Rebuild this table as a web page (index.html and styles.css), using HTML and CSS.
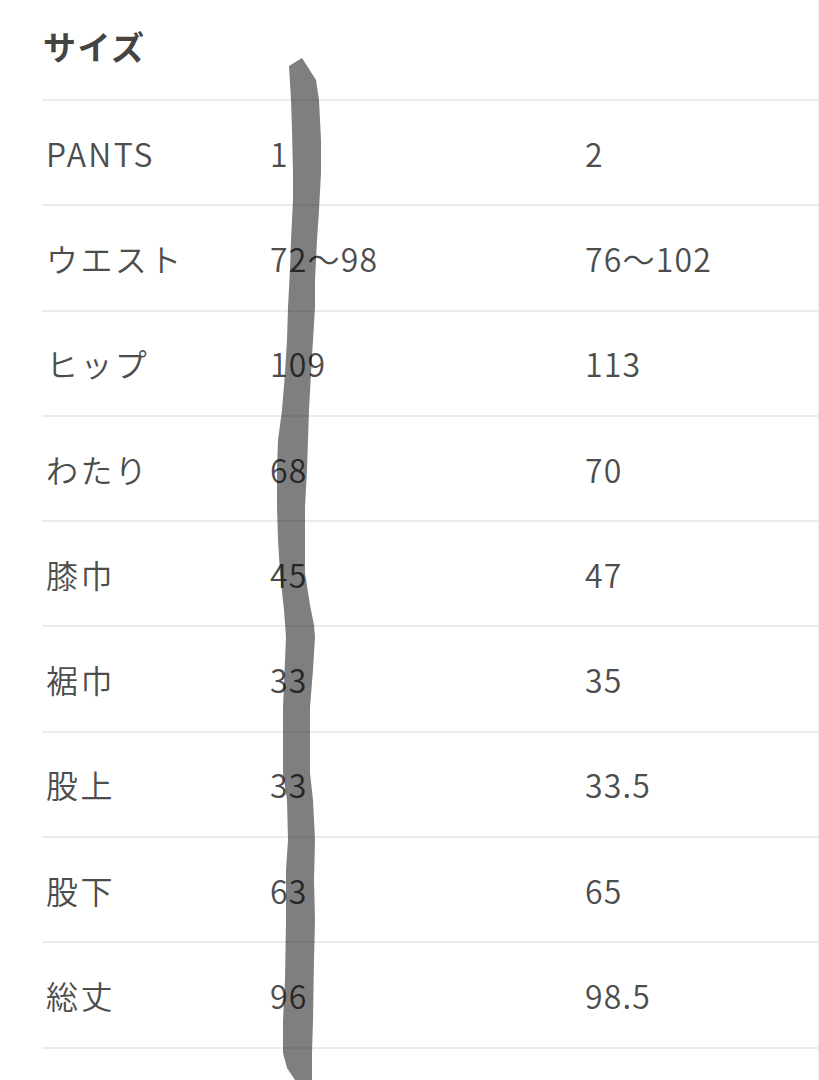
FILE: index.html
```html
<!DOCTYPE html>
<html lang="ja">
<head>
<meta charset="utf-8">
<title>サイズ</title>
<link rel="stylesheet" href="styles.css">
</head>
<body>
<div class="page">
  <section class="size-table">
    <h2 class="title">サイズ</h2>
    <div class="rows">
      <div class="row"><span class="label">PANTS</span><span class="cell">1</span><span class="cell">2</span></div>
      <div class="row"><span class="label">ウエスト</span><span class="cell">72〜98</span><span class="cell">76〜102</span></div>
      <div class="row"><span class="label">ヒップ</span><span class="cell">109</span><span class="cell">113</span></div>
      <div class="row"><span class="label">わたり</span><span class="cell">68</span><span class="cell">70</span></div>
      <div class="row"><span class="label">膝巾</span><span class="cell">45</span><span class="cell">47</span></div>
      <div class="row"><span class="label">裾巾</span><span class="cell">33</span><span class="cell">35</span></div>
      <div class="row"><span class="label">股上</span><span class="cell">33</span><span class="cell">33.5</span></div>
      <div class="row"><span class="label">股下</span><span class="cell">63</span><span class="cell">65</span></div>
      <div class="row"><span class="label">総丈</span><span class="cell">96</span><span class="cell">98.5</span></div>
      <div class="row end"></div>
    </div>
  </section>
  <svg class="scribble" width="819" height="1080" viewBox="0 0 819 1080" aria-hidden="true">
    <path d="M289 66 L302 58 L316 80 L319 100 L321 140 L321 173 L319 210 L317 240 L315 280 L315 307 L313 340 L311 373 L309 410 L308 440 L307 470 L305 507 L305 540 L305 573 L310 605 L314 625 L315 637 L313 670 L310 707 L310 740 L310 773 L313 800 L315 840 L314 880 L315 920 L314 960 L313 1020 L312 1053 L312 1080 L295 1080 L287 1068 L283 1053 L283 1020 L285 980 L286 920 L286 870 L288 840 L287 800 L283 773 L283 707 L285 660 L286 637 L284 610 L280 573 L278 540 L277 507 L277 470 L278 440 L282 410 L285 373 L287 340 L288 307 L290 270 L291 240 L293 200 L293 173 L292 130 L291 100 Z"/>
  </svg>
</div>
</body>
</html>
```

FILE: styles.css
```css
html, body {
  margin: 0;
  padding: 0;
  background: #ffffff;
}

body {
  font-family: "Noto Sans CJK JP", "Noto Sans", sans-serif;
  color: #4d4d4d;
}

.page {
  position: relative;
  width: 818px;
  height: 1080px;
  border-right: 1px solid #ececec;
  overflow: hidden;
}

.size-table {
  padding-left: 42px;
}

.title {
  margin: 0;
  height: 99px;
  box-sizing: border-box;
  padding: 0 0 6px 1px;
  display: flex;
  align-items: center;
  font-size: 33px;
  font-weight: 700;
  letter-spacing: 1.5px;
  color: #444444;
  line-height: 1;
}

.rows {
  display: flex;
  flex-direction: column;
}

.row {
  display: grid;
  grid-template-columns: 228px 315px 1fr;
  align-items: center;
  height: 105.3px;
  box-sizing: border-box;
  border-top: 2px solid #ececec;
  font-size: 32px;
  font-weight: 350;
  line-height: 1;
}

.row.end {
  height: 40px;
}

.label {
  padding-left: 4px;
  letter-spacing: 2.4px;
}

.cell {
  letter-spacing: 1.2px;
}

.scribble {
  position: absolute;
  left: 0;
  top: 0;
  pointer-events: none;
}

.scribble path {
  fill: rgba(0, 0, 0, 0.5);
}
```
